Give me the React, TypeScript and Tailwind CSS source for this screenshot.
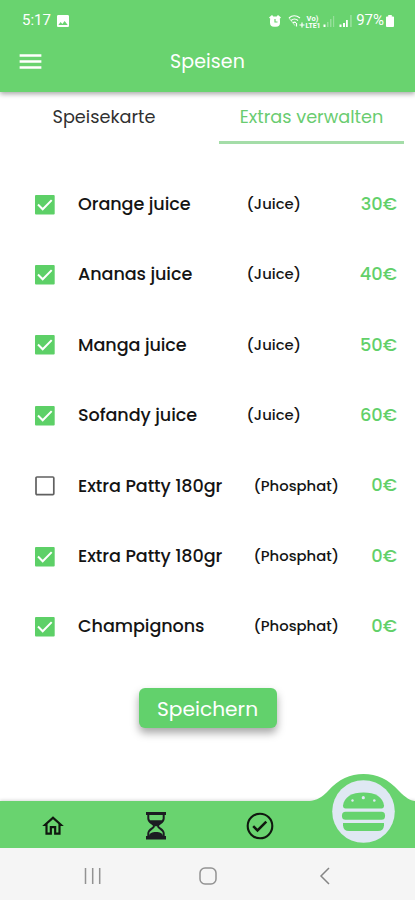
import { useState } from "react";
import { MdImage, MdMenu, MdOutlineHome } from "react-icons/md";

interface Extra {
  id: number;
  name: string;
  category: string;
  price: string;
  active: boolean;
}

const initialExtras: Extra[] = [
  { id: 1, name: "Orange juice", category: "(Juice)", price: "30€", active: true },
  { id: 2, name: "Ananas juice", category: "(Juice)", price: "40€", active: true },
  { id: 3, name: "Manga juice", category: "(Juice)", price: "50€", active: true },
  { id: 4, name: "Sofandy juice", category: "(Juice)", price: "60€", active: true },
  { id: 5, name: "Extra Patty 180gr", category: "(Phosphat)", price: "0€", active: false },
  { id: 6, name: "Extra Patty 180gr", category: "(Phosphat)", price: "0€", active: true },
  { id: 7, name: "Champignons", category: "(Phosphat)", price: "0€", active: true },
];

const AlarmIcon = () => (
  <svg className="ml-auto mr-[7px] h-3 w-3" viewBox="0 0 12 12">
    <path d="M0 2.500L3 0l1.500 1.500L1.500 4zM12 2.500L9 0 7.500 1.500 10.500 4z" fill="white" />
    <rect x="1" y="1.500" width="10" height="10.300" rx="4" fill="white" />
    <path d="M6 4v3h2.500" fill="none" stroke="#69d36f" strokeWidth="1.200" />
  </svg>
);

const SignalIcons = () => (
  <svg className="h-4 w-[67px]" viewBox="0 0 67 16" fill="none">
    {/* Wifi */}
    <g stroke="white" strokeWidth="1.200">
      <path d="M1 5Q6 .5 12 5M3 7.500Q6.500 4.500 10 7.500M5 9.700Q6.500 8.500 8 9.700" />
      <path d="M1 5l6 7.500" opacity=".5" />
      <path d="M14 9.500v5M11.500 12h5M8.500 10v3.500" />
    </g>
    <g fill="white" fontFamily="Roboto, sans-serif" fontWeight="700">
      <text x="18.500" y="8" fontSize="7.500" textLength="12">Vo)</text>
      <text x="17.500" y="14.500" fontSize="7" textLength="15">LTE1</text>
    </g>
    {/* Mobile signal */}
    <path d="M35.500 14v-2.500h2V14zM51.500 14v-2.500h2V14zM55 14v-4h2v4zM58 14V7h1.800v7z" fill="white" />
    <path d="M39 14V9h1.500v5zM42 14V6h1.500v8zM45 14V3h1.200v11z" fill="white" opacity=".3" />
    <path d="M62.300 14V2h1.300v12z" fill="white" opacity=".4" />
  </svg>
);

const HourglassIcon = () => (
  <svg className="h-7 w-[22px]" viewBox="0 0 22 28">
    <path d="M1 0h20v3H1zM1 24h20v3.500H1z" fill="#1c1c22" />
    <path d="M3.300 3v3.500C3.300 11 9 11.500 9 14s-5.700 3-5.700 7.500V25M18.700 3v3.500C18.700 11 13 11.500 13 14s5.700 3 5.700 7.500V25" fill="none" stroke="#1c1c22" strokeWidth="2" />
    <path d="M3.500 8.200h15c-1 3-5.500 3.500-6 6h-3c-.5-2.500-5-3-6-6zM4 24c.5-3 3-4 7-4s6.500 1 7 4z" fill="#1c1c22" />
  </svg>
);

const CheckCircleIcon = () => (
  <svg className="h-7 w-7" viewBox="0 0 28 28" fill="none" stroke="#10180f">
    <circle cx="14" cy="14" r="12.300" strokeWidth="2.100" />
    <path d="M7.200 14.200l4.300 4.300 8.800-8.900" strokeWidth="2.500" />
  </svg>
);

const BurgerIcon = () => (
  <svg className="h-[63px] w-[63px]" viewBox="0 0 63 63">
    <circle cx="31.500" cy="31.500" r="31.300" fill="#dfe8f3" />
    <g fill="#66d36e">
      <path d="M13.500 28.500Q11 28.500 11 25.500C12 17 20 12.500 31.500 12.500S51 17 52 25.500Q52 28.500 49.500 28.500z" />
      <rect x="10" y="31.700" width="43" height="8" rx="3.500" />
      <path d="M11 43h41v2.500Q51.500 51 46 51H17Q11.500 51 11 45.500z" />
    </g>
    <g fill="#dfe8f3">
      <circle cx="20.500" cy="20.500" r="1.200" />
      <circle cx="31.300" cy="17.700" r="1.600" />
      <circle cx="42.300" cy="20.500" r="1.300" />
    </g>
  </svg>
);

const Checkbox = ({ checked, onClick }: { checked: boolean; onClick: () => void }) => (
  <button type="button" onClick={onClick} className="ml-[35px] h-5 w-5 shrink-0">
    <svg className="h-5 w-5" viewBox="0 0 20 20" fill="none">
      {checked ? (
        <>
          <rect width="19.700" height="19.500" rx="1" fill="#5dd067" />
          <path d="M3 9.500l4.700 4.800 9-9.200" stroke="white" strokeWidth="2" />
        </>
      ) : (
        <rect x="1" y="1" width="17.800" height="17.600" rx="1" stroke="#606060" strokeWidth="1.700" />
      )}
    </svg>
  </button>
);

const App = () => {
  const [extras, setExtras] = useState<Extra[]>(initialExtras);

  const toggleExtra = (id: number) => {
    setExtras((prev) =>
      prev.map((extra) =>
        extra.id === id ? { ...extra, active: !extra.active } : extra
      )
    );
  };

  return (
    <div className="flex h-[900px] w-[415px] flex-col overflow-hidden bg-white font-[Poppins,Inter,sans-serif]">
      {/* Header */}
      <header className="h-[92px] shrink-0 bg-[#69d36f] text-white shadow-[0_2px_5px_rgba(0,0,0,0.35)]">
        <div className="flex h-[41px] items-center pl-[22px] pr-[21px] font-[Roboto,sans-serif] text-[15px]">
          <span>5:17</span>
          <MdImage className="ml-1 h-4 w-4" />
          <AlarmIcon />
          <SignalIcons />
          <span className="ml-px text-[15px]">97%</span>
          <svg className="ml-0.5 h-3 w-2" viewBox="0 0 9 13" preserveAspectRatio="none" fill="white">
            <path d="M2.500 0h4v1.500H8q1 0 1 1V12q0 1-1 1H1q-1 0-1-1V2.500q0-1 1-1h1.500z" />
          </svg>
        </div>
        <div className="relative flex h-[43px] items-center justify-center">
          <MdMenu className="absolute top-1.5 left-[16px] h-[29px] w-[29px]" />
          <h1 className="text-[19px] tracking-[0.1px]">Speisen</h1>
        </div>
      </header>

      {/* Tabs */}
      <div className="flex h-[52px] shrink-0 text-[17.700px]">
        <button type="button" className="w-[208px] pb-[2px] text-center text-[#303030]">
          Speisekarte
        </button>
        <button type="button" className="ml-[11px] w-[185px] border-b-[3px] border-[#a4dda8] pt-px text-center text-[#69cc70]">
          Extras verwalten
        </button>
      </div>

      {/* Extras */}
      <ul className="mt-[25.500px] shrink-0">
        {extras.map((extra) => (
          <li key={extra.id} className="relative flex h-[70.4px] items-center">
            <Checkbox checked={extra.active} onClick={() => toggleExtra(extra.id)} />
            <span className="ml-[23px] whitespace-nowrap pb-px text-[17.6px] font-medium tracking-[-0.07px] text-[#141414]">
              {extra.name}
            </span>
            <span
              className={`absolute whitespace-nowrap pb-px text-[14.8px] font-medium text-[#141414] ${
                extra.category === "(Juice)" ? "left-[246.500px]" : "left-[253.500px]"
              }`}
            >
              {extra.category}
            </span>
            <span className="ml-auto mr-[18px] pb-px text-[17.8px] font-medium text-[#62d069]">
              {extra.price}
            </span>
          </li>
        ))}
      </ul>

      <button type="button" className="mx-auto mt-[25.500px] h-10 w-[138px] shrink-0 rounded-md bg-[#62d16c] pt-0.5 text-[20.2px] text-white shadow-[0_5px_9px_rgba(0,0,0,0.35)]">
        Speichern
      </button>

      {/* Bottom navigation */}
      <nav className="relative mt-auto h-[47px] shrink-0 bg-[#69d36f] shadow-[0_-1px_3px_rgba(0,0,0,0.15)]">
        <svg className="absolute -top-[28px] left-[300px] h-[30px] w-[115px]" viewBox="0 0 115 30">
          <path d="M0 28.500C16 28.500 20 26 28 18C39 6 50 1 63.500 1S88 6 99 18C106 25 110 27.500 115 28V30H0z" fill="#69d36f" />
        </svg>
        <div className="relative grid h-full grid-cols-4 place-items-center pt-0.5 pl-px">
          <MdOutlineHome className="h-[26px] w-[26px] text-[#10180f]" />
          <HourglassIcon />
          <CheckCircleIcon />
          <div className="-mt-7">
            <BurgerIcon />
          </div>
        </div>
      </nav>

      {/* System navigation */}
      <div className="relative flex h-[52px] shrink-0 items-center bg-[#f5f5f5] pt-1">
        <svg className="ml-[84px] h-[18px] w-[18px]" viewBox="0 0 18 18" stroke="#929292" strokeWidth="1.500">
          <path d="M1.500 1v16M8.700 1v16M15.700 1v16" />
        </svg>
        <svg className="ml-[97px] h-[18px] w-[18px]" viewBox="0 0 18 18" fill="none" stroke="#929292" strokeWidth="1.500">
          <rect x="1" y="1" width="16" height="16" rx="5" />
        </svg>
        <svg className="ml-[102px] h-[18px] w-[11px]" viewBox="0 0 11 18" fill="none" stroke="#858585" strokeWidth="1.500">
          <path d="M10 1L2 9l8 8" />
        </svg>
      </div>
    </div>
  );
};

export default App;
